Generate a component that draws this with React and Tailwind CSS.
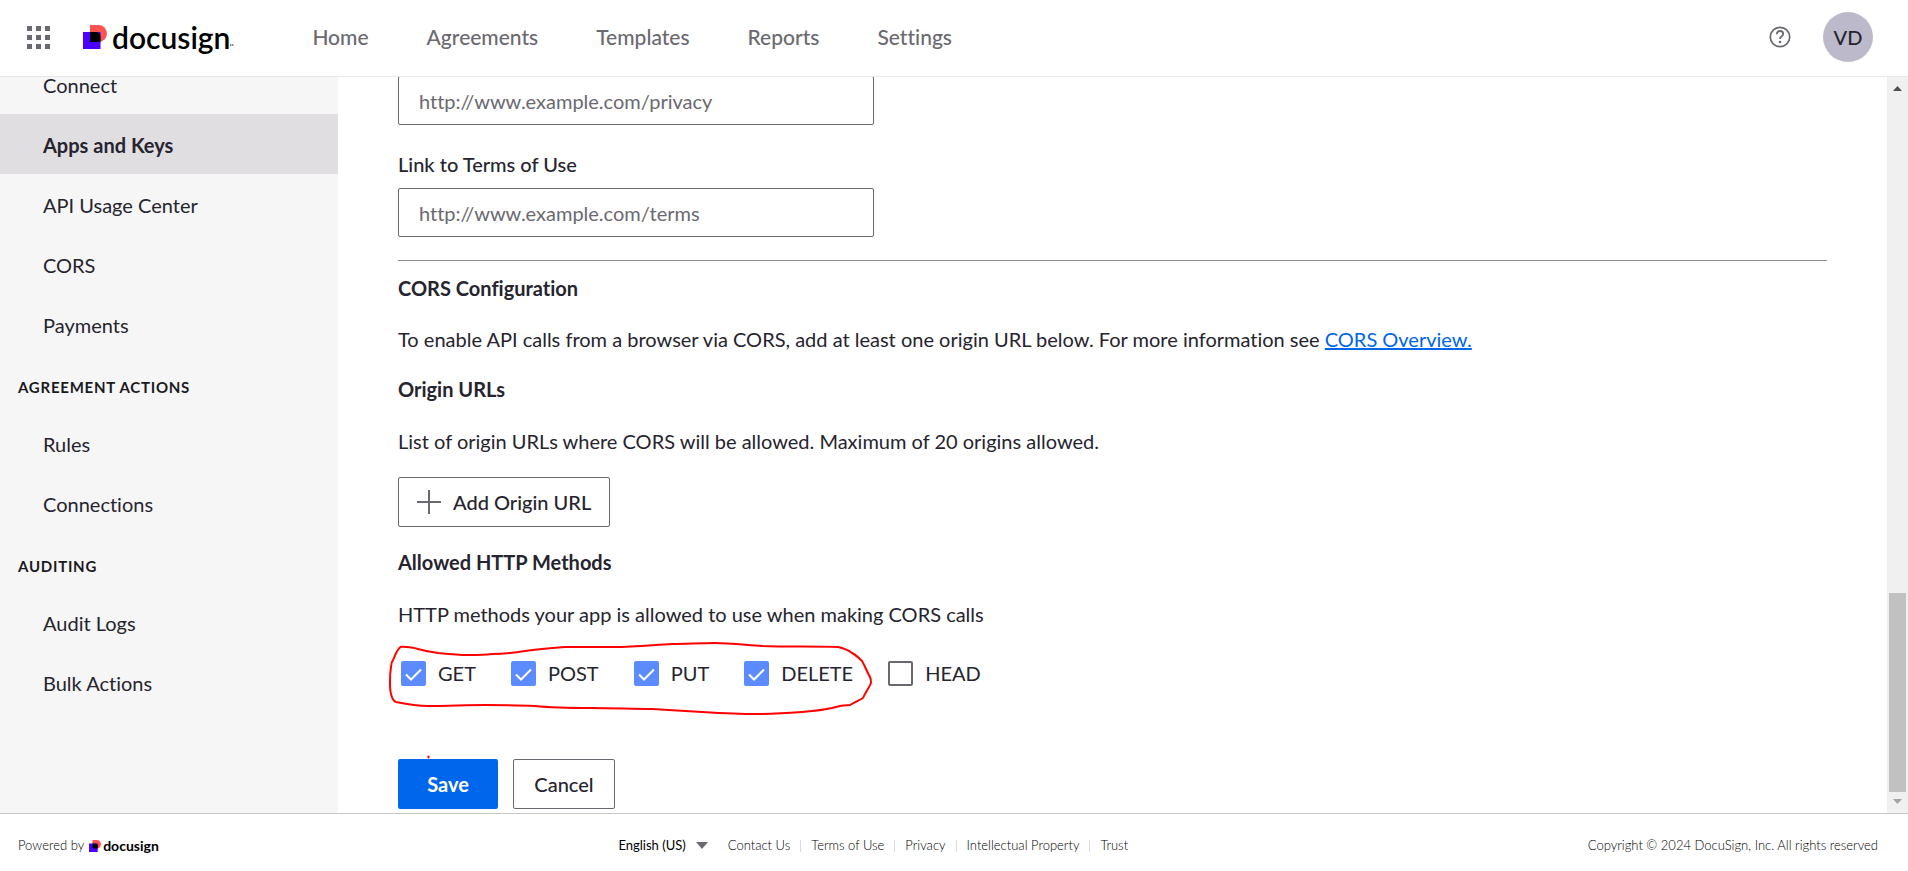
import React from "react";

const navItems = ["Home", "Agreements", "Templates", "Reports", "Settings"];

const sideSections = [
  { title: null, items: ["Connect", "Apps and Keys", "API Usage Center", "CORS", "Payments"] },
  { title: "AGREEMENT ACTIONS", items: ["Rules", "Connections"] },
  { title: "AUDITING", items: ["Audit Logs", "Bulk Actions"] },
];

const methods = [
  { name: "GET", checked: true },
  { name: "POST", checked: true },
  { name: "PUT", checked: true },
  { name: "DELETE", checked: true },
  { name: "HEAD", checked: false },
];

const footerLinks = ["Contact Us", "Terms of Use", "Privacy", "Intellectual Property", "Trust"];

function LogoMark({ className }) {
  return (
    <svg viewBox="0 0 24 24" className={className} aria-hidden="true">
      <path d="M7 0h8.500a8.500 8.500 0 0 1 0 17H7z" fill="#ff5252" />
      <path d="M0 7h17.500v17H0z" fill="#4c00ff" />
      <path d="M7 7h6a4.500 4.500 0 0 1 4.500 4.500V17H7z" fill="#000" />
    </svg>
  );
}

function Header() {
  return (
    <header className="flex h-[77px] shrink-0 items-center border-b border-[#e9e9ea] bg-white pr-[35px] pb-0.5 pl-[26px]">
      <button type="button" aria-label="Switch application" className="text-[#6b6970]">
        <svg viewBox="0 0 24 24" className="size-6" fill="currentColor" aria-hidden="true">
          {[1, 10, 19].map((y) =>
            [1, 10, 19].map((x) => <rect key={x + "-" + y} x={x} y={y} width="5" height="5" />)
          )}
        </svg>
      </button>
      <a href="#home" aria-label="Docusign" className="ml-[33px] flex items-center text-black">
        <LogoMark className="mr-[5px] size-6" />
        <span className="text-[30px] leading-8 font-semibold">docusign</span>
        <svg viewBox="0 0 4 2" className="mt-4 h-0.5 w-1" fill="#8a8a8a" aria-hidden="true">
          <path d="M0 0h1.500v2H0zM2 0h1.500v2H2z" />
        </svg>
      </a>
      <nav className="ml-[78px] flex items-center gap-[58px] text-[21px] font-medium text-[#6b6970]">
        {navItems.map((item) => (
          <a key={item} href={"#" + item.toLowerCase()}>{item}</a>
        ))}
      </nav>
      <div className="ml-auto flex items-center gap-8">
        <button type="button" aria-label="Help" className="text-[#6b6970]">
          <svg viewBox="0 0 22 22" className="size-[22px]" fill="none" stroke="currentColor" aria-hidden="true">
            <circle cx="11" cy="11" r="9.700" strokeWidth="1.700" />
            <path d="M7.800 8.200c0-1.900 1.400-3.200 3.200-3.200s3.200 1.200 3.200 2.900c0 2.300-3.200 2.300-3.200 5" strokeWidth="1.800" />
            <circle cx="11" cy="16" r="1.300" fill="currentColor" stroke="none" />
          </svg>
        </button>
        <button type="button" className="size-[50px] rounded-full bg-[#bcbaca] text-xl font-medium text-[#26242e]">
          VD
        </button>
      </div>
    </header>
  );
}

function Sidebar() {
  return (
    <aside className="w-[338px] shrink-0 bg-[#f6f6f6]">
      <nav className="-mt-[23px]">
        {sideSections.map((section) => (
          <div key={section.items[0]}>
            {section.title && (
              <h2 className="flex h-[59px] items-center pt-2 pl-[18px] text-[15px] font-bold tracking-wider text-[#1b1a21]">
                {section.title}
              </h2>
            )}
            {section.items.map((item) => (
              <a
                key={item}
                href="#settings"
                className={
                  item === "Apps and Keys"
                    ? "flex h-[60px] items-center bg-[#e1dee2] pt-0.5 pl-[43px] font-bold"
                    : "flex h-[60px] items-center pt-0.5 pl-[43px]"
                }
              >
                {item}
              </a>
            ))}
          </div>
        ))}
      </nav>
    </aside>
  );
}

function Checkbox({ name, checked }) {
  return (
    <label className="flex items-center gap-3">
      <span className="grid size-[25px] place-items-center">
        <input
          type="checkbox"
          defaultChecked={checked}
          className="peer col-start-1 row-start-1 size-[25px] appearance-none rounded-xs border-2 border-[#6b6970] bg-white checked:border-0 checked:bg-[#5c8bff]"
        />
        <svg
          viewBox="0 0 25 25"
          className="pointer-events-none invisible col-start-1 row-start-1 size-[25px] peer-checked:visible"
          fill="none"
          stroke="#fff"
          strokeWidth="2"
          aria-hidden="true"
        >
          <path d="M5 13.500l5 5L20 8.500" />
        </svg>
      </span>
      {name}
    </label>
  );
}

function Annotation() {
  return (
    <svg
      viewBox="0 0 490 130"
      className="pointer-events-none absolute -top-[30px] -left-2.5 h-[130px] w-[490px]"
      fill="none"
      stroke="#ff0000"
      strokeWidth="2"
      strokeLinejoin="round"
      strokeLinecap="round"
      aria-hidden="true"
    >
      <path d="M12.700 17.700 C9 21 7 26 6 29 C4 32 3 35 3 38 C2 44 2 48 2 52 C2 58 2 62 3 65 C4 69 5 72 8 73 C18 75 30 77 40 77 C60 77 78 76 97 76 C115 76 130 76 147 77 C166 79 185 79 204 79 C225 79 245 80 264 80 C282 81 298 82 314 83 C332 84 350 85 367 85 C384 85 400 84 414 83 C426 82 436 81 444 79 C450 77 456 76 462 76 C467 73 472 71 475 69 C477 64 481 59 483 54 C483 51 483 50 482 48 C479 43 477 37 474 32 C472 30 468 26 464 24 C460 21 455 19 450 18 C425 17 400 18 374 17 C358 16 342 14 327 14 C312 14 298 15 284 15 C265 16 246 18 227 18 C210 18 194 18 177 18 C163 19 150 20 137 22 C126 24 115 25 104 25 C96 26 88 26 80 26 C69 26 60 25 50 24 C42 23 37 22 30 20 C24 18 21 18 12.700 17.700" />
      <path d="M40.500 127.500v1" />
    </svg>
  );
}

function Content() {
  const input =
    "block h-[49px] w-[476px] rounded-xs border border-[#6b6970] bg-white px-5 text-[#1b1a21] placeholder:text-[#6b6970]";
  const outlined = "h-[50px] rounded-xs border border-[#6b6970] bg-white font-medium";
  return (
    <main className="min-w-0 flex-1 px-[60px]">
      <div className="-mt-px">
        <input aria-label="Link to Privacy Policy" placeholder="http://www.example.com/privacy" className={input} />
      </div>
      <label htmlFor="terms" className="mt-6 block leading-[30px] font-medium">Link to Terms of Use</label>
      <input id="terms" placeholder="http://www.example.com/terms" className={"mt-[9px] " + input} />
      <hr className="mt-[23px] border-[#8f8f8f]" />
      <h2 className="mt-3 leading-[30px] font-bold">CORS Configuration</h2>
      <p className="mt-[21px] leading-[30px]">
        To enable API calls from a browser via CORS, add at least one origin URL below. For more information see{" "}
        <a href="#cors-overview" className="text-[#0066eb] underline">CORS Overview.</a>
      </p>
      <h2 className="mt-5 leading-[30px] font-bold">Origin URLs</h2>
      <p className="mt-[22px] leading-[30px]">List of origin URLs where CORS will be allowed. Maximum of 20 origins allowed.</p>
      <button type="button" className={"mt-[21px] flex items-center gap-3 px-[18px] " + outlined}>
        <svg viewBox="0 0 24 24" className="size-6" stroke="#6b6970" strokeWidth="2" aria-hidden="true">
          <path d="M12 0v24M0 12h24" />
        </svg>
        Add Origin URL
      </button>
      <h2 className="mt-5 leading-[30px] font-bold">Allowed HTTP Methods</h2>
      <p className="mt-[22px] leading-[30px]">HTTP methods your app is allowed to use when making CORS calls</p>
      <div role="group" aria-label="Allowed HTTP Methods" className="relative mt-[30px] flex gap-[35px] pl-[3px]">
        {methods.map((m) => (
          <Checkbox key={m.name} name={m.name} checked={m.checked} />
        ))}
        <Annotation />
      </div>
      <div className="mt-[72px] flex gap-[15px]">
        <button type="button" className="h-[50px] w-[100px] rounded-xs bg-[#0066eb] font-bold text-white">Save</button>
        <button type="button" className={"w-[102px] " + outlined}>Cancel</button>
      </div>
    </main>
  );
}

function ScrollTrack() {
  return (
    <div className="flex w-[21px] shrink-0 flex-col items-center bg-[#f0f0f0]" aria-hidden="true">
      <svg viewBox="0 0 9 5" className="mt-[9px] h-[5px] w-[9px]" fill="#505050"><path d="M0 5L4.500 0L9 5z" /></svg>
      <div className="mt-auto h-[199px] w-[17px] bg-[#c1c1c1]" />
      <svg viewBox="0 0 9 5" className="mt-[7px] mb-[9px] h-[5px] w-[9px]" fill="#a3a3a3"><path d="M0 0L4.500 5L9 0z" /></svg>
    </div>
  );
}

function Footer() {
  return (
    <footer className="flex h-[58px] shrink-0 items-center justify-between border-t border-[#c8c8c8] bg-white pt-1.5 pr-[30px] pl-[18px] text-[13px] font-light text-black">
      <div className="flex items-center gap-[5px]">
        Powered by
        <a href="#docusign" aria-label="Docusign" className="flex items-center gap-0.5 text-sm font-bold text-black">
          <LogoMark className="size-3" />
          docusign
        </a>
      </div>
      <div className="flex items-center">
        <button type="button" className="mr-5 flex items-center gap-2.5 font-normal">
          English (US)
          <svg viewBox="0 0 12 7" className="h-[7px] w-3" fill="#6b6970" aria-hidden="true"><path d="M0 0h12L6 7z" /></svg>
        </button>
        <ul className="flex items-center divide-x divide-[#dcdcdc]">
          {footerLinks.map((link) => (
            <li key={link} className="flex h-3 items-center px-2.5 first:pl-0 last:pr-0">
              <a href="#footer">{link}</a>
            </li>
          ))}
        </ul>
      </div>
      <p>Copyright © 2024 DocuSign, Inc. All rights reserved</p>
    </footer>
  );
}

export default function App() {
  return (
    <div className="flex h-screen flex-col bg-white font-['Lato',sans-serif] text-xl text-[#26242e] [font-variant-ligatures:none]">
      <Header />
      <div className="flex min-h-0 flex-1 overflow-hidden">
        <Sidebar />
        <Content />
        <ScrollTrack />
      </div>
      <Footer />
    </div>
  );
}
